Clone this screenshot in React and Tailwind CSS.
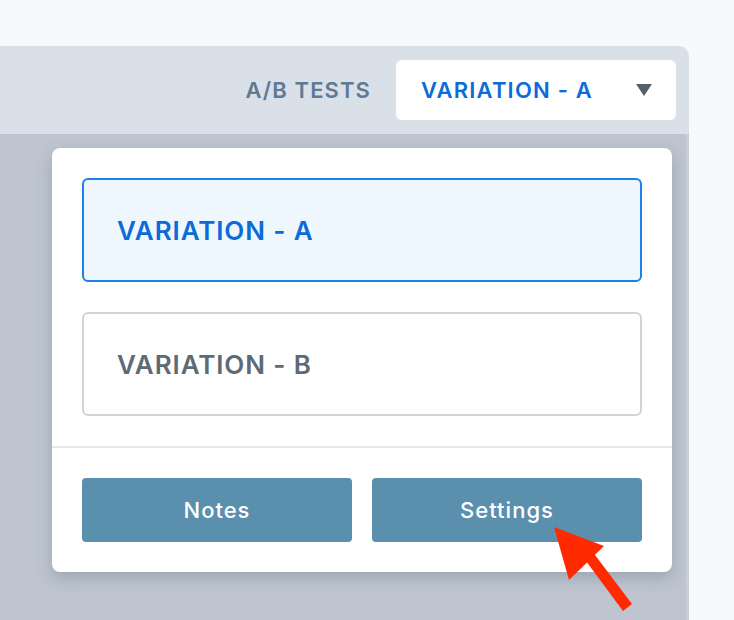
import React from "react";

const font = { fontFamily: "Inter, 'Noto Sans', sans-serif" };

function Option({ label, active }) {
  return (
    <div
      className={
        active
          ? "h-[104px] flex items-center pl-[33px] rounded-[6px] border-2 border-[#1e80ea] bg-[#eff7fe] text-[#0b6bd9]"
          : "h-[104px] flex items-center pl-[33px] rounded-[6px] border-2 border-[#d0d4d9] bg-white text-[#5c6b77]"
      }
    >
      <span className="text-[26px] font-semibold tracking-[0.9px]">{label}</span>
    </div>
  );
}

export default function App() {
  return (
    <div className="w-[734px] h-[620px] bg-[#f8f9fb] overflow-hidden relative" style={font}>
      <div className="w-[689px] h-[574px] mt-[46px] rounded-tr-[10px] overflow-hidden flex flex-col relative">
        <div className="h-[88px] shrink-0 bg-[#d9e0e7] flex items-center justify-end pr-[13px]">
          <span className="text-[22px] font-semibold text-[#5e7a94] tracking-[1.1px] mr-[25px]">
            A/B TESTS
          </span>
          <div className="w-[280px] h-[60px] bg-white rounded-[6px] flex items-center justify-between pl-[25px] pr-[24px]">
            <span className="text-[22px] font-semibold text-[#0b6bd9] tracking-[1.2px]">VARIATION - A</span>
            <svg width="16" height="12" viewBox="0 0 16 12">
              <path d="M0 0 H16 L8 12 Z" fill="#56606b" />
            </svg>
          </div>
        </div>
        <div className="flex-1 flex">
          <div className="flex-1 bg-[#bec5d1]" />
          <div className="w-[3px] bg-[#c9ced8]" />
        </div>

        <div className="absolute left-[52px] top-[102px] w-[620px] bg-white rounded-[8px] shadow-[0_6px_16px_rgba(60,70,90,0.25)]">
          <div className="p-[30px] flex flex-col gap-[30px]">
            <Option label="VARIATION - A" active />
            <Option label="VARIATION - B" />
          </div>
          <div className="h-[2px] bg-[#e6e9ec]" />
          <div className="p-[30px] flex gap-[20px]">
            <button className="flex-1 h-[64px] rounded-[4px] bg-[#5b8fae] text-white text-[22px] font-medium tracking-[1px]">
              Notes
            </button>
            <button className="flex-1 h-[64px] rounded-[4px] bg-[#5b8fae] text-white text-[22px] font-medium tracking-[1px]">
              Settings
            </button>
          </div>
        </div>
      </div>

      <svg className="absolute left-0 top-0 pointer-events-none" width="734" height="620" viewBox="0 0 734 620">
        <path d="M554 527 L604 546 L569 580 Z" fill="#ff2a00" />
        <path d="M583 557 L592 551 L632 604 L623 611 Z" fill="#ff2a00" />
      </svg>
    </div>
  );
}
